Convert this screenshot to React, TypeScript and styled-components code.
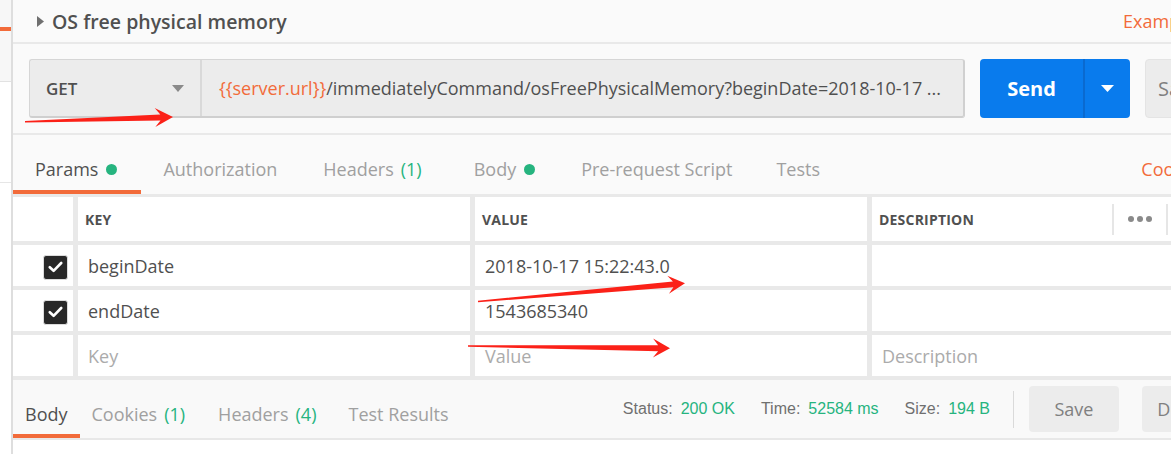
import React from "react";
import styled, { createGlobalStyle } from "styled-components";

const GlobalStyle = createGlobalStyle`
  html, body { margin: 0; padding: 0; }
  body {
    width: 1171px;
    height: 454px;
    overflow: hidden;
    background: #fafafa;
    font-family: "Open Sans", "Noto Sans", sans-serif;
    color: #505050;
  }
`;

const ORANGE = "#f26b3a";
const GREEN = "#26b47f";
const TEXT = "#505050";
const MUTED = "#a0a0a0";

const Page = styled.div`
  position: relative;
  display: flex;
  width: 1171px;
  height: 454px;
  overflow: hidden;
  background: #fafafa;
`;

/* ---------- left sidebar strip ---------- */
const Sidebar = styled.div`
  flex: 0 0 11px;
  display: flex;
  flex-direction: column;
  border-right: 2px solid #dedede;
`;
const SidebarTop = styled.div`
  height: 82px;
  box-sizing: border-box;
  padding-top: 27px;
  background: #f7f7f7;
  border-bottom: 1px solid #e2e2e2;
`;
const SidebarMarker = styled.div`
  height: 4px;
  background: ${ORANGE};
`;
const SidebarItem = styled.div`
  height: 100px;
  background: #fff;
  border-bottom: 1px solid #e6e6e6;
`;
const SidebarRest = styled.div`
  flex: 1;
  background: #fff;
`;

/* ---------- main ---------- */
const Main = styled.div`
  flex: 1;
  min-width: 0;
  display: flex;
  flex-direction: column;
  overflow: hidden;
`;

const TitleBar = styled.div`
  height: 42px;
  display: flex;
  align-items: center;
  padding-left: 24px;
  border-bottom: 2px solid #e9e9e9;
`;
const Title = styled.div`
  flex: 1;
  margin-left: 8px;
  font-size: 19.5px;
  font-weight: 600;
  color: ${TEXT};
  white-space: nowrap;
`;
const EdgeLink = styled.span<{ $clip: number }>`
  flex: 0 0 auto;
  margin-right: ${(p) => -p.$clip}px;
  color: ${ORANGE};
  font-size: 18px;
  white-space: nowrap;
`;

const RequestBar = styled.div`
  display: flex;
  gap: 15px;
  padding: 15px 0 15px 16px;
  border-bottom: 2px solid #e9e9e9;
`;
const UrlGroup = styled.div`
  flex: 0 0 936px;
  height: 59px;
  box-sizing: border-box;
  display: flex;
  background: #ececec;
  border: 1px solid #d6d6d6;
  border-bottom-width: 2px;
  border-right-width: 2px;
  border-bottom-color: #cfcfcf;
  border-right-color: #d0d0d0;
  border-radius: 3px;
`;
const Method = styled.div`
  flex: 0 0 172px;
  box-sizing: border-box;
  display: flex;
  align-items: center;
  justify-content: space-between;
  padding: 0 16px 0 16px;
  border-right: 2px solid #d9d9d9;
  font-size: 17px;
  font-weight: 600;
  color: ${TEXT};
`;
const UrlText = styled.div`
  flex: 1;
  min-width: 0;
  display: flex;
  align-items: center;
  padding-left: 17px;
  font-size: 18px;
  color: ${TEXT};
  white-space: nowrap;
  overflow: hidden;
`;
const Variable = styled.span`
  color: ${ORANGE};
`;
const SendButton = styled.div`
  flex: 0 0 150px;
  height: 59px;
  display: flex;
  background: #097bed;
  border-radius: 4px;
  color: #fff;
`;
const SendLabel = styled.div`
  flex: 0 0 103px;
  display: flex;
  align-items: center;
  justify-content: center;
  font-size: 20px;
  font-weight: 700;
`;
const SendCaret = styled.div`
  flex: 1;
  display: flex;
  align-items: center;
  justify-content: center;
  border-left: 2px solid #0a6ad0;
`;
const GreyButton = styled.div<{ $clip?: number; $h: number; $size: number; $w?: number }>`
  flex: 0 0 ${(p) => p.$w ?? 90}px;
  height: ${(p) => p.$h}px;
  box-sizing: border-box;
  display: flex;
  align-items: center;
  justify-content: center;
  margin-right: ${(p) => -(p.$clip ?? 0)}px;
  background: #ececec;
  border-radius: 4px;
  color: #808080;
  font-size: ${(p) => p.$size}px;
`;
const SaveTop = styled(GreyButton)`
  justify-content: flex-start;
  padding-left: 12px;
  border: 1px solid #e4e4e4;
`;

/* ---------- tabs ---------- */
const TabBar = styled.div<{ $h: number }>`
  display: flex;
  height: ${(p) => p.$h}px;
  flex: 0 0 auto;
`;
const Tab = styled.div<{ $active?: boolean; $pad: number; $padRight?: number }>`
  box-sizing: border-box;
  height: 100%;
  padding: 22px ${(p) => p.$padRight ?? p.$pad}px 0 ${(p) => p.$pad}px;
  display: flex;
  align-items: flex-start;
  line-height: 24px;
  font-size: 18px;
  white-space: nowrap;
  color: ${(p) => (p.$active ? TEXT : MUTED)};
  border-bottom: 4px solid ${(p) => (p.$active ? ORANGE : "transparent")};
`;
const Count = styled.span`
  margin-left: 7px;
  color: ${GREEN};
`;
const Dot = styled.span`
  width: 11px;
  height: 11px;
  margin: 7px 0 0 8px;
  border-radius: 50%;
  background: ${GREEN};
`;
const TabLink = styled.div<{ $clip: number }>`
  margin-left: auto;
  margin-right: ${(p) => -p.$clip}px;
  padding-top: 22px;
  line-height: 24px;
  font-size: 18px;
  color: ${ORANGE};
  white-space: nowrap;
`;

/* ---------- params table ---------- */
const Table = styled.div`
  display: grid;
  grid-template-columns: 60px 392px 392px 1fr;
  grid-template-rows: 44px 41px 41px 41px;
  column-gap: 5px;
  row-gap: 4px;
  padding: 3px 0 4px;
  background: #e9e9e9;
`;
const HeadCell = styled.div`
  display: flex;
  align-items: center;
  padding-left: 7px;
  background: #fff;
  font-size: 14px;
  font-weight: 700;
  color: ${TEXT};
  letter-spacing: 0.2px;
`;
const HeadLabel = styled.span`
  flex: 1;
`;
const HeadRule = styled.span`
  align-self: center;
  width: 2px;
  height: 31px;
  background: #e6e6e6;
`;
const MoreDots = styled.span`
  flex: 0 0 52px;
  display: flex;
  justify-content: center;
  gap: 3px;
`;
const MoreDot = styled.span`
  width: 6px;
  height: 6px;
  border-radius: 50%;
  background: #8a8a8a;
`;
const HeadTail = styled.span`
  flex: 0 0 3px;
`;
const CheckCell = styled.div`
  display: flex;
  align-items: center;
  justify-content: flex-end;
  padding-right: 5px;
  background: #fff;
`;
const Checkbox = styled.span`
  width: 23px;
  height: 23px;
  margin-top: 3px;
  display: flex;
  align-items: center;
  justify-content: center;
  background: #282828;
  border: 1px solid #dcdcdc;
  border-radius: 3px;
`;
const Cell = styled.div<{ $placeholder?: boolean }>`
  display: flex;
  align-items: center;
  padding-left: 10px;
  background: #fff;
  font-size: 18px;
  color: ${(p) => (p.$placeholder ? "#ababab" : TEXT)};
  white-space: nowrap;
`;

/* ---------- response bar ---------- */
const ResponseBar = styled.div`
  display: flex;
  align-items: center;
  height: 58px;
  flex: 0 0 auto;
  background: #f9f9f9;
  border-bottom: 2px solid #e8e8e8;
`;
const ResponseTabs = styled(TabBar)`
  align-self: stretch;
`;
const StatusArea = styled.div`
  margin-left: auto;
  display: flex;
  align-items: center;
  font-family: "Liberation Sans", Arial, sans-serif;
  font-size: 16px;
  color: #707070;
`;
const StatusItem = styled.span`
  & + & {
    margin-left: 26px;
  }
`;
const StatusValue = styled.span`
  margin-left: 8px;
  color: ${GREEN};
`;
const VRule = styled.span`
  width: 1px;
  height: 37px;
  margin: 0 15px 0 23px;
  background: #dadada;
`;
const Spacer = styled.span<{ $w: number }>`
  flex: 0 0 ${(p) => p.$w}px;
`;
const WhiteFill = styled.div`
  flex: 1;
  background: #fff;
`;

const Annotations = styled.svg`
  position: absolute;
  left: 0;
  top: 0;
  pointer-events: none;
`;

function arrow(x1: number, y1: number, x2: number, y2: number, headLen: number, headHalf: number) {
  const dx = x2 - x1;
  const dy = y2 - y1;
  const L = Math.hypot(dx, dy);
  const ux = dx / L;
  const uy = dy / L;
  const nx = -uy;
  const ny = ux;
  const bx = x2 - ux * headLen;
  const by = y2 - uy * headLen;
  const kx = x2 - ux * headLen * 0.7;
  const ky = y2 - uy * headLen * 0.7;
  const pts: [number, number][] = [
    [x1 + nx * 0.7, y1 + ny * 0.7],
    [kx + nx * 3, ky + ny * 3],
    [bx + nx * headHalf, by + ny * headHalf],
    [x2, y2],
    [bx - nx * headHalf, by - ny * headHalf],
    [kx - nx * 3, ky - ny * 3],
    [x1 - nx * 0.7, y1 - ny * 0.7],
  ];
  return pts.map((p) => `${p[0].toFixed(1)},${p[1].toFixed(1)}`).join(" ");
}

const CheckMark = () => (
  <svg width="15" height="12" viewBox="0 0 15 12">
    <path d="M1.8 6.2 L5.6 9.8 L13.2 2" fill="none" stroke="#fff" strokeWidth="2.6" strokeLinecap="round" strokeLinejoin="round" />
  </svg>
);

export default function App() {
  return (
    <>
      <GlobalStyle />
      <Page>
        <Sidebar>
          <SidebarTop>
            <SidebarMarker />
          </SidebarTop>
          <SidebarItem />
          <SidebarRest />
        </Sidebar>
        <Main>
          <TitleBar>
            <svg width="7" height="11" viewBox="0 0 7 11">
              <path d="M0 0 L7 5.5 L0 11 Z" fill="#6f6f6f" />
            </svg>
            <Title>OS free physical memory</Title>
            <EdgeLink $clip={58}>Examples (1)</EdgeLink>
          </TitleBar>

          <RequestBar>
            <UrlGroup>
              <Method>
                GET
                <svg width="12" height="7" viewBox="0 0 12 7">
                  <path d="M0 0 L12 0 L6 7 Z" fill="#8a8a8a" />
                </svg>
              </Method>
              <UrlText>
                <Variable>{"{{server.url}}"}</Variable>
                /immediatelyCommand/osFreePhysicalMemory?beginDate=2018-10-17 ...
              </UrlText>
            </UrlGroup>
            <SendButton>
              <SendLabel>Send</SendLabel>
              <SendCaret>
                <svg width="13" height="7" viewBox="0 0 13 7">
                  <path d="M0 0 L13 0 L6.5 7 Z" fill="#fff" />
                </svg>
              </SendCaret>
            </SendButton>
            <SaveTop $h={59} $size={20} $clip={70}>
              Save
            </SaveTop>
          </RequestBar>

          <TabBar $h={59}>
            <Tab $active $pad={22} $padRight={24}>
              Params
              <Dot />
            </Tab>
            <Tab $pad={22} $padRight={24}>
              Authorization
            </Tab>
            <Tab $pad={22} $padRight={30}>
              Headers<Count>(1)</Count>
            </Tab>
            <Tab $pad={22} $padRight={24}>
              Body
              <Dot />
            </Tab>
            <Tab $pad={22}>Pre-request Script</Tab>
            <Tab $pad={22}>Tests</Tab>
            <TabLink $clip={36}>Cookies</TabLink>
          </TabBar>

          <Table>
            <HeadCell />
            <HeadCell>KEY</HeadCell>
            <HeadCell>VALUE</HeadCell>
            <HeadCell>
              <HeadLabel>DESCRIPTION</HeadLabel>
              <HeadRule />
              <MoreDots>
                <MoreDot />
                <MoreDot />
                <MoreDot />
              </MoreDots>
              <HeadRule />
              <HeadTail />
            </HeadCell>

            <CheckCell>
              <Checkbox>
                <CheckMark />
              </Checkbox>
            </CheckCell>
            <Cell>beginDate</Cell>
            <Cell>2018-10-17 15:22:43.0</Cell>
            <Cell />

            <CheckCell>
              <Checkbox>
                <CheckMark />
              </Checkbox>
            </CheckCell>
            <Cell>endDate</Cell>
            <Cell>1543685340</Cell>
            <Cell />

            <CheckCell />
            <Cell $placeholder>Key</Cell>
            <Cell $placeholder>Value</Cell>
            <Cell $placeholder>Description</Cell>
          </Table>

          <ResponseBar>
            <ResponseTabs $h={58}>
              <Tab $active $pad={12}>
                Body
              </Tab>
              <Tab $pad={12}>
                Cookies<Count>(1)</Count>
              </Tab>
              <Tab $pad={21} $padRight={20}>
                Headers<Count>(4)</Count>
              </Tab>
              <Tab $pad={12}>Test Results</Tab>
            </ResponseTabs>
            <StatusArea>
              <StatusItem>
                Status:<StatusValue>200 OK</StatusValue>
              </StatusItem>
              <StatusItem>
                Time:<StatusValue>52584 ms</StatusValue>
              </StatusItem>
              <StatusItem>
                Size:<StatusValue>194 B</StatusValue>
              </StatusItem>
            </StatusArea>
            <VRule />
            <GreyButton $h={46} $size={18}>
              Save
            </GreyButton>
            <Spacer $w={23} />
            <GreyButton $h={46} $size={18} $w={116} $clip={87}>
              Download
            </GreyButton>
          </ResponseBar>
          <WhiteFill />
        </Main>

        <Annotations width="1171" height="454" viewBox="0 0 1171 454">
          <polygon points={arrow(25, 121.7, 173, 117, 18, 9.5)} fill="#fb2118" />
          <polygon points={arrow(478, 301.5, 685, 283.3, 17, 9)} fill="#fb2118" />
          <polygon points={arrow(468, 346, 670, 348.3, 17, 9.5)} fill="#fb2118" />
        </Annotations>
      </Page>
    </>
  );
}
